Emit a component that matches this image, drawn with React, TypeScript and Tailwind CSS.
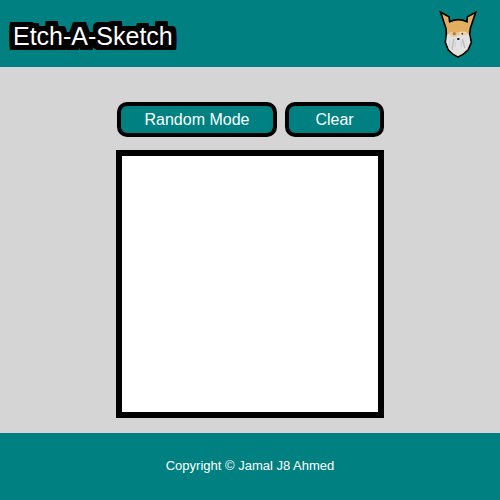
function FoxLogo() {
  return (
    <svg viewBox="24 24 120 150" className="h-[50px] w-10" role="img" aria-label="Fox">
      <path
        d="M32 34 L57 47 L59 62 Q85 50 111 62 L112 47 L137 34 L121 82 L119 100 L124 124 L114 147 Q100 162 84 168 Q68 162 55 147 L46 124 L49 100 L48 83 Z"
        fill="#e3ae60"
        stroke="#000"
        strokeWidth="5"
      />
      <path
        d="M51 101 Q60 94 70 96 L84 103 L99 96 Q110 93 117 101 L121 124 L112 145 Q99 159 84 165 Q69 159 57 145 L49 124 Z"
        fill="#e2e2e2"
      />
      <path d="M55 97 Q68 88 83 95 L80 107 L65 108 Z" fill="#ecc9a0" />
      <path d="M84 95 Q99 88 112 96 L107 108 L90 107 Z" fill="#f2dcc4" />
      <circle cx="73" cy="98" r="5" fill="#b08040" />
      <circle cx="97" cy="98" r="3" fill="#5c402a" />
      <circle cx="106" cy="99" r="2" fill="#e0aa66" />
      <ellipse cx="85" cy="114" rx="4" ry="3" fill="#111" />
      <path
        d="M72 114 L68 132 L66 146 M97 114 L102 132 L105 141"
        fill="none"
        stroke="#b8b8b8"
        strokeWidth="4"
      />
      <path d="M60 118 L58 136 M77 122 L75 138 M93 120 L95 136" fill="none" stroke="#cecece" strokeWidth="3" />
    </svg>
  );
}

// A solid outline: the letters repeated at every offset within the outline's reach.
const reach = [-5, -4, -3, -2, -1, 0, 1, 2, 3, 4, 5];
const outline = reach
  .flatMap((x) => reach.map((y) => `${x}px ${y}px 0 #000`))
  .join(", ");

const button =
  "h-[35px] rounded-[10px] border-4 border-black bg-[#008080] text-base leading-none text-white";

export default function App() {
  return (
    <div className="flex min-h-screen flex-col bg-[#d5d5d5] font-['Liberation_Sans',Arial,sans-serif] text-white">
      <header className="flex h-[67px] items-center justify-between bg-[#008080] pr-[22px] pl-[13px]">
        <h1 className="pt-1 text-[25px] leading-7" style={{ textShadow: outline }}>
          Etch-A-Sketch
        </h1>
        <FoxLogo />
      </header>
      <main className="flex grow flex-col items-center justify-center gap-[13px] px-4 pt-6 pb-1">
        <div className="flex w-[268px] justify-between pl-px">
          <button type="button" className={`${button} w-40`}>
            Random Mode
          </button>
          <button type="button" className={`${button} w-[99px]`}>
            Clear
          </button>
        </div>
        <div className="aspect-square w-[268px] border-6 border-black bg-white" />
      </main>
      <footer className="flex h-[67px] items-center justify-center bg-[#008080] pb-0.5 text-[13px] leading-4">
        <p>Copyright © Jamal J8 Ahmed</p>
      </footer>
    </div>
  );
}
